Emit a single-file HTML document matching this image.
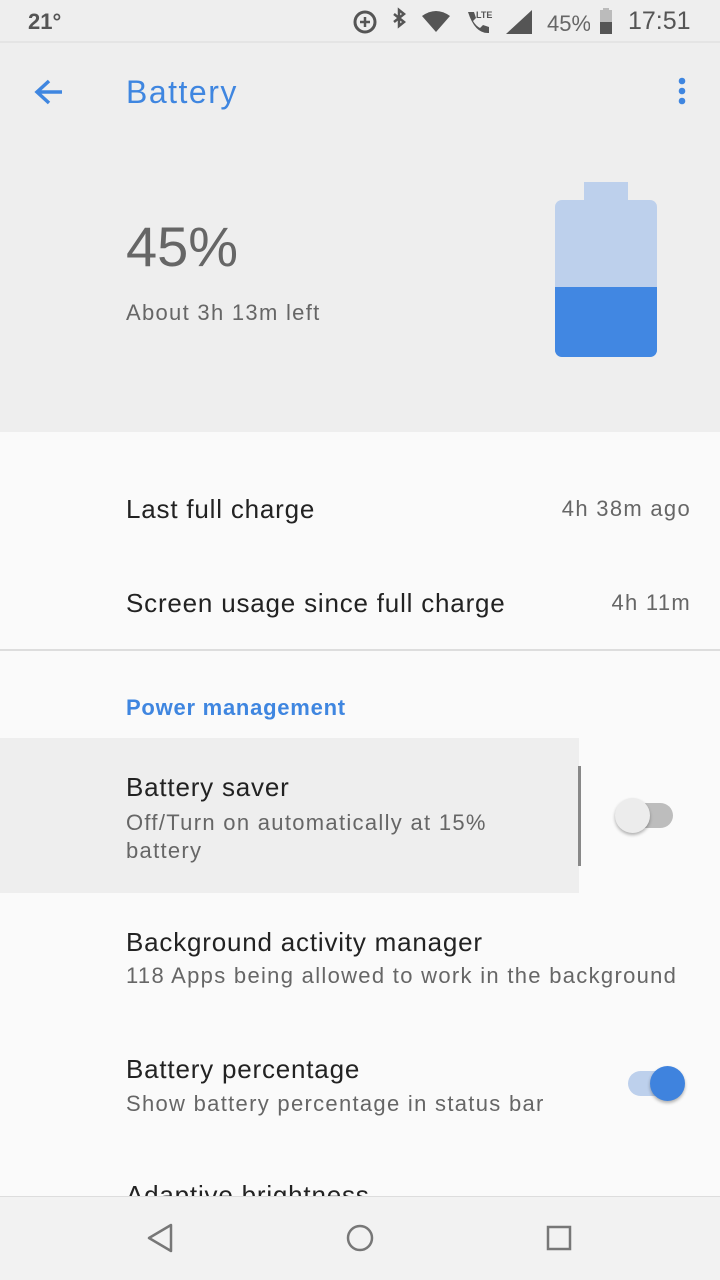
<!DOCTYPE html><html><head><meta charset="utf-8"><style>
*{margin:0;padding:0;box-sizing:border-box}
body{width:720px;height:1280px;position:relative;overflow:hidden;background:#fafafa;font-family:"Liberation Sans",sans-serif}
.a{position:absolute;white-space:nowrap}
.t{letter-spacing:0.8px}
.s{letter-spacing:1.3px}
</style></head><body>
<div class="a" style="left:0;top:0;width:720px;height:432px;background:#eeeeee"></div>
<div class="a" style="left:0;top:41px;width:720px;height:2px;background:#e4e4e4"></div>
<div class="a" style="left:28px;top:9px;font-size:22px;color:#555;font-weight:bold">21°</div>
<svg class="a" style="left:350px;top:6px" width="240" height="32" viewBox="0 0 240 32">
<circle cx="15" cy="16" r="10" fill="none" stroke="#555" stroke-width="3"/><path d="M15 11v10M10 16h10" stroke="#555" stroke-width="2.5"/>
<path d="M44 8l10 8-5 4V4l5 4-10 8" fill="none" stroke="#555" stroke-width="2.5"/>
<path d="M72 10q14-10 28 0l-14 16z" fill="#555"/>
<path d="M118 6h6l2 6-3 3q3 5 7 7l3-3 6 2v6q-14 1-21-21z" fill="#555"/>
<text x="126" y="12" font-size="9" font-weight="bold" fill="#555">LTE</text>
<path d="M156 28L182 4v24z" fill="#555"/>
<text x="197" y="25" font-size="22" fill="#666">45%</text>
</svg>
<svg class="a" style="left:598px;top:8px" width="20" height="28"><rect x="5" y="0" width="6" height="3" fill="#bbb"/><rect x="2" y="2" width="12" height="24" fill="#bbb"/><rect x="2" y="14" width="12" height="12" fill="#555"/></svg>
<div class="a" style="left:628px;top:7px;font-size:25px;color:#555">17:51</div>
<svg class="a" style="left:32px;top:76px" width="34" height="32"><path d="M30 16H6M17 5L5 16l12 11" fill="none" stroke="#3f86e0" stroke-width="3.5"/></svg>
<div class="a" style="left:126px;top:74px;font-size:32px;color:#3f86e0;letter-spacing:1.5px">Battery</div>
<svg class="a" style="left:676px;top:76px" width="12" height="32"><circle cx="6" cy="5" r="3.3" fill="#3f86e0"/><circle cx="6" cy="15" r="3.3" fill="#3f86e0"/><circle cx="6" cy="25" r="3.3" fill="#3f86e0"/></svg>
<div class="a" style="left:126px;top:214px;font-size:56px;color:#666">45%</div>
<div class="a s" style="left:126px;top:300px;font-size:22px;color:#666">About 3h 13m left</div>
<div class="a" style="left:584px;top:182px;width:44px;height:22px;background:#bdd0ec"></div>
<div class="a" style="left:555px;top:200px;width:102px;height:157px;background:#bdd0ec;border-radius:7px;overflow:hidden"><div style="position:absolute;left:0;top:87px;width:102px;height:70px;background:#4187e2"></div></div>
<div class="a t" style="left:126px;top:494px;font-size:26px;color:#222">Last full charge</div>
<div class="a s" style="right:29px;top:496px;font-size:22px;color:#666">4h 38m ago</div>
<div class="a t" style="left:126px;top:588px;font-size:26px;color:#222">Screen usage since full charge</div>
<div class="a s" style="right:29px;top:590px;font-size:22px;color:#666">4h 11m</div>
<div class="a" style="left:0;top:649px;width:720px;height:2px;background:#ddd"></div>
<div class="a" style="left:126px;top:695px;font-size:22px;color:#3f86e0;font-weight:bold;letter-spacing:0.75px">Power management</div>
<div class="a" style="left:0;top:738px;width:579px;height:155px;background:#eeeeee"></div>
<div class="a" style="left:578px;top:766px;width:3px;height:100px;background:#888"></div>
<div class="a t" style="left:126px;top:772px;font-size:26px;color:#222">Battery saver</div>
<div class="a s" style="left:126px;top:809px;font-size:22px;color:#666;line-height:28px">Off/Turn on automatically at 15%<br>battery</div>
<div class="a" style="left:620px;top:803px;width:53px;height:25px;border-radius:13px;background:#bdbdbd"></div>
<div class="a" style="left:615px;top:798px;width:35px;height:35px;border-radius:50%;background:#ececec;box-shadow:0 2px 3px rgba(0,0,0,.3)"></div>
<div class="a t" style="left:126px;top:927px;font-size:26px;color:#222">Background activity manager</div>
<div class="a s" style="left:126px;top:963px;font-size:22px;color:#666">118 Apps being allowed to work in the background</div>
<div class="a" style="left:628px;top:1071px;width:53px;height:25px;border-radius:13px;background:#bdd0ec"></div>
<div class="a" style="left:650px;top:1066px;width:35px;height:35px;border-radius:50%;background:#3f83de;box-shadow:0 2px 3px rgba(0,0,0,.3)"></div>
<div class="a t" style="left:126px;top:1054px;font-size:26px;color:#222">Battery percentage</div>
<div class="a s" style="left:126px;top:1091px;font-size:22px;color:#666">Show battery percentage in status bar</div>
<div class="a t" style="left:126px;top:1180px;font-size:26px;color:#222">Adaptive brightness</div>
<div class="a" style="left:0;top:1196px;width:720px;height:84px;background:#f2f2f2;border-top:1px solid #ddd"></div>
<svg class="a" style="left:0;top:1196px" width="720" height="84"><path d="M171 29v26l-22-13z" fill="none" stroke="#777" stroke-width="2.5" stroke-linejoin="round"/><circle cx="360" cy="42" r="12" fill="none" stroke="#777" stroke-width="2.5"/><rect x="548" y="31" width="22" height="22" fill="none" stroke="#777" stroke-width="2.5"/></svg>
</body></html>
